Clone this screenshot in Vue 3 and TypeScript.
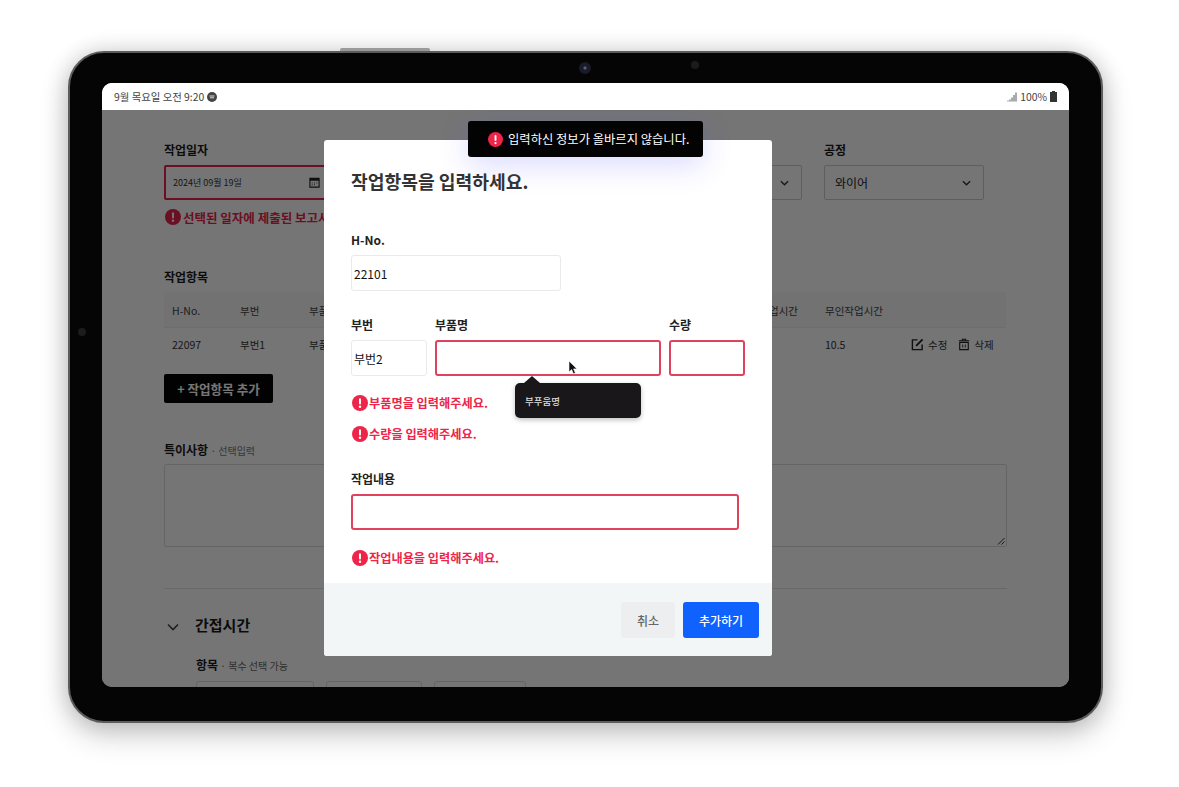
<template>
  <div class="stage">
    <div class="tablet">
      <span class="tablet__key" aria-hidden="true"></span>
      <span class="tablet__dot" aria-hidden="true"></span>
      <span class="tablet__cam" aria-hidden="true"></span>
      <span class="tablet__sensor" aria-hidden="true"></span>

      <div class="screen">
        <div class="status">
          <span class="status__left">
            9월 목요일 오전 9:20
            <svg class="status__app" viewBox="0 0 10 10" width="10" height="10">
              <circle cx="5" cy="5" r="5" fill="#444" />
              <path d="M2.5 4h5M3 5.8h4" stroke="#ddd" stroke-width="1" />
            </svg>
          </span>
          <span class="status__right">
            <svg viewBox="0 0 10 10" width="10" height="10">
              <path d="M1 8.5v1M3 7.5v2M5 5.5v4M7 3v6.5M9 .5v9" stroke="#555" stroke-width="1" />
            </svg>
            100%
            <svg viewBox="0 0 7 11" width="7" height="11">
              <path d="M2 0h3v1h2v10H0V1h2z" fill="#333" />
            </svg>
          </span>
        </div>

        <div class="body">
          <div class="page">
            <div class="fields">
              <div class="field">
                <label class="label">작업일자</label>
                <div class="box box--error box--date">
                  <span>2024년 09월 19일</span>
                  <svg viewBox="0 0 12 12" width="11" height="11">
                    <path d="M1 1.5h10V11H1z" fill="none" stroke="#222" stroke-width="1.2" />
                    <path d="M1 1.5h10V4H1z" fill="#222" />
                    <path d="M3 6.500h1M5.500 6.500h1M8 6.500h1M3 8.500h1M5.500 8.500h1" stroke="#222" />
                  </svg>
                </div>
              </div>
              <div class="field field--blind">
                <div class="box box--select">
                  <span></span>
                  <svg class="chev" viewBox="0 0 10 6" width="9" height="6"><path d="M1 1l4 4 4-4" /></svg>
                </div>
              </div>
              <div class="field">
                <label class="label">공정</label>
                <div class="box box--select">
                  <span>와이어</span>
                  <svg class="chev" viewBox="0 0 10 6" width="9" height="6"><path d="M1 1l4 4 4-4" /></svg>
                </div>
              </div>
            </div>

            <div class="page-error">
              <svg class="alert" viewBox="0 0 16 16" width="16" height="16">
                <circle cx="8" cy="8" r="8" fill="#e8244b" />
                <rect x="7" y="3.2" width="2" height="6.4" rx="1" fill="#fff" />
                <circle cx="8" cy="11.8" r="1.2" fill="#fff" />
              </svg>
              <span>선택된 일자에 제출된 보고서</span>
            </div>

            <h4 class="label label--section">작업항목</h4>
            <div class="table">
              <div class="table__row table__row--head">
                <span v-for="h in headers" :key="h">{{ h }}</span>
              </div>
              <div class="table__row table__row--body">
                <span>22097</span>
                <span>부번1</span>
                <span>부품명1</span>
                <span></span>
                <span>10.5</span>
                <span class="table__actions">
                  <span class="action">
                    <svg viewBox="0 0 14 14" width="13" height="13">
                      <path d="M7 2H1.500v10.500H12V7" fill="none" stroke="#222" stroke-width="1.5" />
                      <path d="M5.500 8.500L12.500 1.500" stroke="#222" stroke-width="2" />
                    </svg>
                    수정
                  </span>
                  <span class="action">
                    <svg viewBox="0 0 14 14" width="12" height="13">
                      <path d="M1 2.500h12M5 2.500V1h4v1.500" fill="none" stroke="#222" stroke-width="1.2" />
                      <path d="M2 4.500h10V13H2z" fill="none" stroke="#222" stroke-width="1.3" />
                      <path d="M5.500 7v3.500M8.500 7v3.500" stroke="#222" />
                    </svg>
                    삭제
                  </span>
                </span>
              </div>
            </div>

            <button type="button" class="add">+ 작업항목 추가</button>

            <div class="note-label">
              <b>특이사항</b><span> · 선택입력</span>
            </div>
            <div class="note">
              <svg class="note__grip" viewBox="0 0 8 8" width="8" height="8">
                <path d="M7.500 1L1 7.500M7.500 4.500L4.500 7.500" stroke="#333" />
              </svg>
            </div>

            <hr class="rule" />

            <div class="section">
              <svg class="section__chev" viewBox="0 0 12 8" width="12" height="8">
                <path d="M1 1.500l5 5 5-5" />
              </svg>
              <span>간접시간</span>
            </div>
            <div class="picks">
              <div class="picks__label"><b>항목</b><span> · 복수 선택 가능</span></div>
              <div class="picks__row">
                <span class="pick pick--a"></span>
                <span class="pick pick--b"></span>
                <span class="pick pick--c"></span>
              </div>
            </div>
          </div>

          <div class="overlay"></div>

          <div class="modal">
            <div class="modal__main">
              <h2 class="modal__title">작업항목을 입력하세요.</h2>

              <label class="mlabel mlabel--first">H-No.</label>
              <div class="input input--hno">22101</div>

              <div class="parts">
                <div class="part part--no">
                  <label class="mlabel">부번</label>
                  <div class="input">부번2</div>
                </div>
                <div class="part part--name">
                  <label class="mlabel">부품명</label>
                  <div class="input input--error"></div>
                </div>
                <div class="part part--qty">
                  <label class="mlabel">수량</label>
                  <div class="input input--error"></div>
                </div>
              </div>

              <div v-for="msg in partErrors" :key="msg" class="merror">
                <svg class="alert" viewBox="0 0 16 16" width="16" height="16">
                  <circle cx="8" cy="8" r="8" fill="#ee2449" />
                  <rect x="7" y="3.2" width="2" height="6.4" rx="1" fill="#fff" />
                  <circle cx="8" cy="11.8" r="1.2" fill="#fff" />
                </svg>
                <span>{{ msg }}</span>
              </div>

              <label class="mlabel mlabel--work">작업내용</label>
              <div class="input input--error input--work"></div>
              <div class="merror merror--work">
                <svg class="alert" viewBox="0 0 16 16" width="16" height="16">
                  <circle cx="8" cy="8" r="8" fill="#ee2449" />
                  <rect x="7" y="3.2" width="2" height="6.4" rx="1" fill="#fff" />
                  <circle cx="8" cy="11.8" r="1.2" fill="#fff" />
                </svg>
                <span>작업내용을 입력해주세요.</span>
              </div>
            </div>

            <div class="modal__foot">
              <button type="button" class="btn btn--ghost">취소</button>
              <button type="button" class="btn btn--primary">추가하기</button>
            </div>

            <div class="tip">
              <span class="tip__arrow"></span>
              부푸움명
            </div>
            <svg class="cursor" viewBox="0 0 10 15" width="10" height="15">
              <path d="M1 1v11l2.600-2.400 1.800 4.200 2-.9-1.800-4H9z" fill="#111" stroke="#fff" stroke-width=".6" />
            </svg>
          </div>

          <div class="toast">
            <svg viewBox="0 0 16 16" width="15" height="15">
              <circle cx="8" cy="8" r="8" fill="#ee2449" />
              <rect x="7" y="3.2" width="2" height="6.4" rx="1" fill="#fff" />
              <circle cx="8" cy="11.8" r="1.2" fill="#fff" />
            </svg>
            <span>입력하신 정보가 올바르지 않습니다.</span>
          </div>
        </div>
      </div>
    </div>
  </div>
</template>

<script setup lang="ts">
const headers: string[] = ['H-No.', '부번', '부품명', '유인작업시간', '무인작업시간', '']

const partErrors: string[] = ['부품명을 입력해주세요.', '수량을 입력해주세요.']
</script>

<style>
html,
body {
  margin: 0;
  background: #fff;
}
</style>

<style scoped>
.stage {
  width: 1179px;
  height: 787px;
  overflow: hidden;
  padding: 51px 0 0 68px;
  box-sizing: border-box;
  background: #fff;
  font-family: 'Noto Sans CJK KR', 'Noto Sans', sans-serif;
  color: #111;
}

.tablet {
  position: relative;
  width: 1035px;
  height: 672px;
  box-sizing: border-box;
  padding: 30px 32px 36px;
  background: #050505;
  border: 2px solid #5c5c5c;
  border-radius: 36px;
  box-shadow: 0 12px 30px rgba(0, 0, 0, 0.2), 0 0 22px rgba(0, 0, 0, 0.16);
}
.tablet__key {
  position: absolute;
  left: 270px;
  top: -5px;
  width: 90px;
  height: 3px;
  background: #9a9a9a;
  border-radius: 2px 2px 0 0;
}
.tablet__dot {
  position: absolute;
  left: 8px;
  top: 275px;
  width: 8px;
  height: 8px;
  border-radius: 50%;
  background: #1c1c1c;
}
.tablet__cam {
  position: absolute;
  left: 509px;
  top: 9px;
  width: 12px;
  height: 12px;
  border-radius: 50%;
  background: radial-gradient(circle, #5a6080 0 1px, #1a1b28 2px 5px, #16161c 6px);
}
.tablet__sensor {
  position: absolute;
  left: 621px;
  top: 8px;
  width: 8px;
  height: 8px;
  border-radius: 50%;
  background: #1b1b1b;
}

.screen {
  width: 967px;
  height: 604px;
  border-radius: 10px;
  overflow: hidden;
  background: #fff;
  display: flex;
  flex-direction: column;
}

.status {
  flex: 0 0 27px;
  display: flex;
  align-items: center;
  justify-content: space-between;
  padding: 0 12px 0 12px;
  font-size: 10.4px;
  color: #444;
  background: #fff;
}
.status__left,
.status__right {
  display: inline-flex;
  align-items: center;
  gap: 3px;
}

.body {
  position: relative;
  flex: 1;
  overflow: hidden;
}

.page {
  padding: 32px 62px 0;
  color: #1a1a1a;
}
.fields {
  display: grid;
  grid-template-columns: 178px 437px 160px;
  column-gap: 22.5px;
}
.field--blind {
  padding-top: 23px;
}
.label {
  display: block;
  margin: 0 0 7px;
  font-size: 12px;
  line-height: 16px;
  font-weight: 700;
}
.box {
  height: 35px;
  box-sizing: border-box;
  display: flex;
  align-items: center;
  justify-content: space-between;
  border: 1px solid #ccc;
  border-radius: 2px;
  padding: 0 12px 0 10px;
  font-size: 12px;
  background: #fff;
}
.box--date {
  font-size: 9px;
  color: #333;
  padding: 0 20px 0 7px;
}
.box--error {
  border: 2px solid #e8244b;
}
.chev {
  fill: none;
  stroke: #333;
  stroke-width: 1.5;
}

.page-error {
  display: flex;
  align-items: center;
  gap: 2px;
  margin-top: 7px;
  height: 20px;
  font-size: 12.5px;
  font-weight: 700;
  color: #e8244b;
  margin-left: 1px;
}
.alert {
  flex: none;
}

.label--section {
  margin: 42px 0 7px;
}

.table {
  width: 842px;
  border-radius: 3px;
  background: #fff;
  font-size: 10.5px;
  color: #333;
}
.table__row {
  display: grid;
  grid-template-columns: 68px 69px 431px 85px 86px 1fr;
  align-items: center;
  height: 34px;
  padding-left: 8px;
  box-sizing: border-box;
}
.table__row--head {
  height: 36px;
  padding-top: 2px;
  background: #f8f8f8;
  color: #444;
  border-bottom: 1px solid #eee;
}
.table__row--body {
  padding-bottom: 2px;
}
.table__actions {
  display: flex;
  gap: 11px;
}
.action {
  display: inline-flex;
  align-items: center;
  gap: 4px;
}

.add {
  display: block;
  margin-top: 12px;
  width: 109px;
  height: 29px;
  border: 0;
  border-radius: 2px;
  background: #060606;
  color: #fff;
  font-family: inherit;
  font-size: 12.6px;
  font-weight: 700;
  padding: 0;
}

.note-label {
  margin-top: 39px;
  font-size: 12px;
  line-height: 16px;
}
.note-label span {
  font-size: 10px;
  color: #777;
}
.note {
  position: relative;
  margin-top: 5px;
  height: 83px;
  box-sizing: border-box;
  border: 1px solid #ddd;
  border-radius: 2px;
  background: #fff;
}
.note__grip {
  position: absolute;
  right: 1px;
  bottom: 1px;
}

.rule {
  margin: 41px 0 0;
  border: 0;
  border-top: 1px solid #e2e2e2;
}

.section {
  display: flex;
  align-items: center;
  gap: 16px;
  margin-top: 25px;
  padding-left: 3px;
  font-size: 15px;
  line-height: 22px;
  font-weight: 700;
}
.section__chev {
  fill: none;
  stroke: #444;
  stroke-width: 1.6;
  margin-top: 3px;
}

.picks {
  padding-left: 32px;
  margin-top: 21px;
}
.picks__label {
  font-size: 12px;
  line-height: 16px;
}
.picks__label span {
  font-size: 10px;
  color: #666;
}
.picks__row {
  display: flex;
  gap: 12px;
  margin-top: 7px;
}
.pick {
  height: 30px;
  box-sizing: border-box;
  border: 1px solid #ddd;
  border-radius: 3px;
}
.pick--a {
  width: 118px;
}
.pick--b {
  width: 96px;
}
.pick--c {
  width: 92px;
}

.overlay {
  position: absolute;
  inset: 0;
  background: rgba(0, 0, 0, 0.54);
}

.modal {
  position: absolute;
  left: 222px;
  top: 30px;
  width: 448px;
  height: 516px;
  display: flex;
  flex-direction: column;
  background: #fff;
  border-radius: 3px;
}
.modal__main {
  flex: 1;
  padding: 27px 27px 0;
}
.modal__title {
  margin: 0;
  font-size: 18.2px;
  line-height: 28px;
  font-weight: 700;
  color: #333;
}
.mlabel {
  display: block;
  font-size: 12px;
  line-height: 16px;
  font-weight: 700;
  color: #222;
  margin-bottom: 7px;
}
.mlabel--first {
  margin-top: 37px;
}
.input {
  height: 36px;
  box-sizing: border-box;
  display: flex;
  align-items: center;
  padding-left: 2px;
  border: 1px solid #eaeaea;
  border-radius: 3px;
  font-size: 12px;
  color: #111;
  background: #fff;
}
.input--hno {
  width: 210px;
}
.input--error {
  border: 2px solid #e0415c;
}
.parts {
  display: flex;
  gap: 8px;
  margin-top: 26px;
}
.part--no {
  width: 76px;
}
.part--name {
  width: 226px;
}
.part--qty {
  width: 76px;
}
.merror {
  display: flex;
  align-items: center;
  gap: 1px;
  height: 20px;
  margin-top: 11px;
  margin-left: 1px;
  font-size: 12.2px;
  font-weight: 700;
  color: #ee2449;
}
.parts + .merror {
  margin-top: 17px;
}
.mlabel--work {
  margin-top: 27px;
}
.input--work {
  width: 388px;
}
.merror--work {
  margin-top: 18px;
}

.modal__foot {
  flex: 0 0 73px;
  display: flex;
  justify-content: flex-end;
  align-items: flex-start;
  gap: 8px;
  padding: 19px 13px 0 0;
  box-sizing: border-box;
  background: #f2f6f7;
  border-radius: 0 0 3px 3px;
}
.btn {
  height: 36px;
  border: 0;
  border-radius: 3px;
  font-family: inherit;
  font-size: 12px;
  font-weight: 500;
  padding: 0;
}
.btn--ghost {
  width: 54px;
  background: #eceef0;
  color: #666;
}
.btn--primary {
  width: 76px;
  background: #0f62fe;
  color: #fff;
}

.tip {
  position: absolute;
  left: 191px;
  top: 243px;
  width: 126px;
  height: 35px;
  box-sizing: border-box;
  padding-left: 10px;
  display: flex;
  align-items: center;
  background: #19171a;
  border-radius: 5px;
  color: #ddd;
  font-size: 9.5px;
  font-weight: 500;
  box-shadow: 0 2px 5px rgba(0, 0, 0, 0.25);
}
.tip__arrow {
  position: absolute;
  left: 9px;
  top: -7px;
  width: 0;
  height: 0;
  border-left: 8px solid transparent;
  border-right: 8px solid transparent;
  border-bottom: 7px solid #19171a;
}
.cursor {
  position: absolute;
  left: 244px;
  top: 220px;
}

.toast {
  position: absolute;
  left: 366px;
  top: 11px;
  width: 235px;
  height: 36px;
  box-sizing: border-box;
  display: flex;
  align-items: center;
  gap: 5px;
  padding-left: 20px;
  background: #030304;
  border-radius: 3px;
  color: #fff;
  font-size: 12.3px;
  box-shadow: 0 8px 30px rgba(70, 70, 255, 0.2);
}
</style>
